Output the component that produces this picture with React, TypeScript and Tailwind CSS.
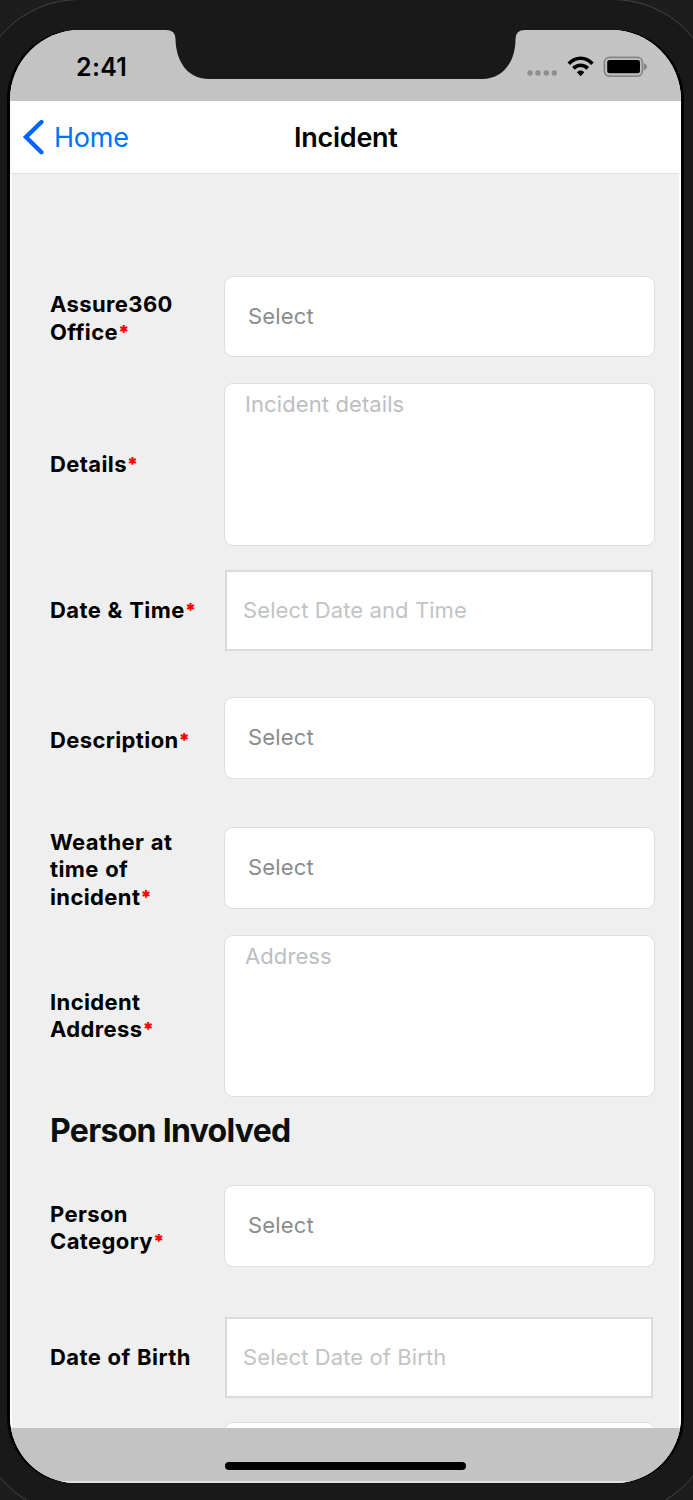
import { clsx } from 'clsx';

interface Field {
  lines: string[];
  required?: boolean;
  kind: 'select' | 'textarea' | 'date';
  placeholder: string;
  row: string;
  nudge?: string;
}

const incidentFields: Field[] = [
  { lines: ['Assure360', 'Office'], required: true, kind: 'select', placeholder: 'Select', row: 'mt-[102px] h-[81px]', nudge: 'pt-[4px]' },
  { lines: ['Details'], required: true, kind: 'textarea', placeholder: 'Incident details', row: 'mt-[26px] h-[163px]' },
  { lines: ['Date & Time'], required: true, kind: 'date', placeholder: 'Select Date and Time', row: 'mt-[24px] h-[81px]' },
  { lines: ['Description'], required: true, kind: 'select', placeholder: 'Select', row: 'mt-[46px] h-[82px]', nudge: 'pt-[5px]' },
  { lines: ['Weather at', 'time of', 'incident'], required: true, kind: 'select', placeholder: 'Select', row: 'mt-[48px] h-[82px]', nudge: 'pt-[4px]' },
  { lines: ['Incident', 'Address'], required: true, kind: 'textarea', placeholder: 'Address', row: 'mt-[26px] h-[162px]' },
];

const personFields: Field[] = [
  { lines: ['Person', 'Category'], required: true, kind: 'select', placeholder: 'Select', row: 'h-[82px]', nudge: 'pt-[4px]' },
  { lines: ['Date of Birth'], kind: 'date', placeholder: 'Select Date of Birth', row: 'mt-[50px] h-[81px]' },
  { lines: [], kind: 'select', placeholder: '', row: 'mt-[24px] h-[82px]' },
];

function FieldRow({ field }: { field: Field }) {
  return (
    <div className={clsx('flex shrink-0 items-center', field.row)}>
      <div
        className={clsx(
          'w-[174px] shrink-0 text-[22px] leading-[27.5px] font-bold tracking-[0.38px] [word-spacing:0.9px] text-black',
          field.nudge
        )}
      >
        {field.lines.map((line, i) => (
          <div key={line} className="h-[27.5px] whitespace-nowrap">
            {line}
            {field.required && i === field.lines.length - 1 && (
              <span className="align-[1.5px] text-[19px] leading-none font-black text-[#ff0000]">*</span>
            )}
          </div>
        ))}
      </div>
      {field.kind === 'select' && (
        <div className="flex h-full w-[431px] items-center rounded-[9px] border border-[#dedede] bg-white pb-px pl-[23px] text-[22px] tracking-[0.15px] text-[#8c8c8c]">
          {field.placeholder}
        </div>
      )}
      {field.kind === 'textarea' && (
        <div className="h-full w-[431px] rounded-[9px] border border-[#dedede] bg-white pt-[7px] pl-[20px] text-[22px] leading-[27px] tracking-[0.1px] text-[#bdbdc2]">
          {field.placeholder}
        </div>
      )}
      {field.kind === 'date' && (
        <div className="ml-px flex h-full w-[428px] items-center border-2 border-[#dbdbdb] bg-white pl-[16px] text-[22px] tracking-[0.1px] text-[#c3c3c3]">
          {field.placeholder}
        </div>
      )}
    </div>
  );
}

function StatusBar() {
  return (
    <div className="flex h-[71px] shrink-0 justify-between bg-[#c3c3c3]">
      <div className="pt-[20px] pl-[66px] text-[25px] leading-[34px] font-semibold tracking-[0.3px] text-black">2:41</div>
      <svg className="mt-[22px] mr-[30px] h-[30px] w-[124px]" viewBox="0 0 124 30">
        <g fill="#8e8e8e">
          <circle cx="3" cy="21" r="2.7" />
          <circle cx="11" cy="21" r="2.7" />
          <circle cx="19.3" cy="21" r="2.7" />
          <circle cx="27.3" cy="21" r="2.7" />
        </g>
        <g fill="none" stroke="#000" strokeWidth="3.7">
          <path d="M41.8 11.8 C48.5 4.4 58.7 4.4 65.4 11.8" />
          <path d="M46.4 16.4 C50.4 12.2 56.8 12.2 60.8 16.4" />
        </g>
        <path d="M53.6 24.2 L49.9 20.2 C52 17.8 55.2 17.8 57.3 20.2 Z" fill="#000" />
        <rect x="77.4" y="5.3" width="38" height="18.8" rx="5" fill="none" stroke="#858585" strokeWidth="1.8" />
        <rect x="80.2" y="8" width="32.8" height="13.3" rx="2.2" fill="#000" />
        <path d="M116.8 11.3 Q120 12.4 120 14.7 Q120 17 116.8 18.1 Z" fill="#858585" />
      </svg>
    </div>
  );
}

function App() {
  return (
    <div className="relative h-[1500px] w-[693px] overflow-hidden bg-[#1d1d1d] pt-[30px] pl-[10px] font-[Inter,sans-serif]">
      {/* Outer bezel */}
      <div className="absolute -top-px -bottom-[15px] -left-[24px] w-[740px] rounded-[103px] border border-[#444444] bg-[#191919]" />

      <div className="relative flex h-[1453px] w-[671px] flex-col overflow-hidden rounded-t-[70px] rounded-b-[66px] bg-[#efefef] shadow-[-3px_0_0_#000,3px_0_0_#000]">
        <StatusBar />

        <div className="flex h-[73px] shrink-0 items-center border-b border-[#e2e2e2] bg-white">
          <svg className="ml-[12px] h-[36px] w-[24px]" viewBox="0 0 24 36" fill="none" stroke="#0064ff" strokeWidth="4.4">
            <path d="M19.4 3 L4 18 L19.4 33.2" strokeLinecap="round" strokeLinejoin="miter" />
          </svg>
          <div className="ml-[8px] w-[240px] pt-[3px] text-[27px] tracking-[-0.25px] text-[#0072ff]">Home</div>
          <div className="pt-[2px] text-[27px] font-semibold tracking-[-0.25px] text-black">Incident</div>
        </div>

        <div className="flex min-h-0 flex-1 flex-col overflow-hidden border-x-2 border-white pl-[38px]">
          {incidentFields.map((field) => (
            <FieldRow key={field.lines[0]} field={field} />
          ))}
          <h2 className="mt-[12px] mb-[33px] text-[32px] leading-[43px] font-bold tracking-[-0.7px] text-[#0b0f0e]">Person Involved</h2>
          {personFields.map((field, i) => (
            <FieldRow key={i} field={field} />
          ))}
        </div>

        <div className="flex h-[55px] shrink-0 justify-center border-b-2 border-[#e4e4e4] bg-[#c3c3c3] pt-[34px]">
          <div className="h-[8px] w-[241px] rounded-full bg-black" />
        </div>
      </div>

      {/* Notch */}
      <svg className="absolute top-[29px] left-[166px] h-[50px] w-[359px]" viewBox="0 0 359 50">
        <path d="M0 0 V1 Q9.5 1 9.5 10 C10 33 22 50 43 50 H316 C337 50 349.5 33 349.5 10 Q349.5 1 359 1 V0 Z" fill="#191919" />
      </svg>
    </div>
  );
}

export default App;
